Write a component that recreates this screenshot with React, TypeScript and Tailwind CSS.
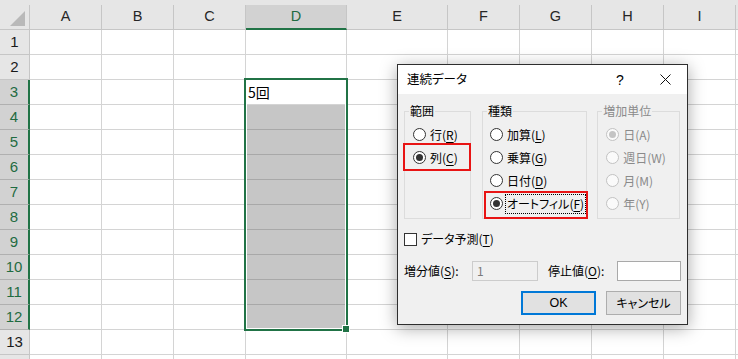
import React from "react";

const COLS = [
  { l: "A", w: 72 },
  { l: "B", w: 72 },
  { l: "C", w: 72 },
  { l: "D", w: 101 },
  { l: "E", w: 101 },
  { l: "F", w: 72 },
  { l: "G", w: 72 },
  { l: "H", w: 72 },
  { l: "I", w: 72 },
];

const ROWS = [1, 2, 3, 4, 5, 6, 7, 8, 9, 10, 11, 12, 13, 14];

function wClass(w: number) {
  return w === 72 ? "w-[72px]" : "w-[101px]";
}

function Radio({
  checked,
  disabled,
  focus,
  children,
}: {
  checked?: boolean;
  disabled?: boolean;
  focus?: boolean;
  children: React.ReactNode;
}) {
  return (
    <div className="h-[23px] flex items-center">
      <span
        className={`w-[13px] h-[13px] rounded-full border flex items-center justify-center shrink-0 ${
          disabled ? "border-[#c2c2c2] bg-[#fafafa]" : "border-[#333333] bg-white"
        }`}
      >
        {checked && (
          <span
            className={`w-[7px] h-[7px] rounded-full ${disabled ? "bg-[#c4c4c4]" : "bg-[#333333]"}`}
          />
        )}
      </span>
      {focus ? (
        <span className="ml-[2px] border border-dotted border-black px-[1px] py-[3px] whitespace-nowrap">
          {children}
        </span>
      ) : (
        <span className={`ml-[4px] whitespace-nowrap ${disabled ? "text-[#8a8a8a]" : ""}`}>{children}</span>
      )}
    </div>
  );
}

function U({ children }: { children: React.ReactNode }) {
  return <span className="underline underline-offset-[2px] decoration-1">{children}</span>;
}

export default function App() {
  return (
    <div className="relative w-[738px] h-[359px] overflow-hidden bg-white">
      {/* Column header */}
      <div className="flex h-[30px] bg-[#e6e6e6] pt-[5px]">
        <div className="w-[30px] h-[25px] shrink-0 border-r border-b border-[#c6c6c6] relative">
          <svg className="absolute left-0 top-0" width="29" height="24" viewBox="0 0 29 24">
            <polygon points="10,21 25,21 25,6" fill="#b9b9b9" />
          </svg>
        </div>
        {COLS.map((c) => (
          <div
            key={c.l}
            className={`${wClass(c.w)} h-[25px] shrink-0 flex items-center justify-center border-r border-[#c6c6c6] font-['Liberation_Sans',sans-serif] text-[14.5px] ${
              c.l === "D"
                ? "bg-[#d2d2d2] border-b-2 border-b-[#217346] text-[#1f6b41]"
                : "border-b text-[#262626]"
            }`}
          >
            {c.l}
          </div>
        ))}
        <div className="flex-1 h-[25px] border-b border-[#c6c6c6]" />
      </div>

      {/* Rows */}
      {ROWS.map((r) => {
        const sel = r >= 3 && r <= 12;
        return (
          <div key={r} className="flex h-[25px]">
            <div
              className={`w-[30px] h-full shrink-0 flex items-center justify-center border-b font-['Liberation_Sans',sans-serif] text-[15px] ${
                sel
                  ? "bg-[#d2d2d2] border-r-2 border-r-[#217346] border-b-[#b0b0b0] text-[#1f6b41]"
                  : "bg-[#e6e6e6] border-r border-[#c6c6c6] text-[#1a1a1a]"
              }`}
            >
              {r <= 13 ? r : ""}
            </div>
            {COLS.map((c) => {
              const gray = c.l === "D" && r >= 4 && r <= 12;
              return (
                <div
                  key={c.l}
                  className={`${wClass(c.w)} h-full shrink-0 border-r border-b ${
                    gray ? "bg-[#c6c6c6] border-r-[#d4d4d4] border-b-[#a8a8a8]" : "border-[#d4d4d4]"
                  } flex items-center`}
                >
                  {c.l === "D" && r === 3 && (
                    <span className="pl-[2px] text-[14px] text-black font-['Noto_Sans_CJK_JP',sans-serif]">
                      5回
                    </span>
                  )}
                </div>
              );
            })}
            <div className="flex-1 h-full border-b border-[#d4d4d4]" />
          </div>
        );
      })}

      {/* Selection border */}
      <div className="absolute left-[244px] top-[78px] w-[104px] h-[253px] border-2 border-[#217346] shadow-[inset_0_0_0_1px_#ffffff] pointer-events-none" />
      <div className="absolute left-[342px] top-[325px] w-[8px] h-[8px] bg-[#217346] border border-white" />

      {/* Dialog */}
      <div className="absolute left-[397px] top-[64px] w-[291px] h-[261px] border border-[#2e2e2e] bg-[#f0f0f0] shadow-[0_3px_16px_rgba(0,0,0,0.35)] flex flex-col font-['Noto_Sans_CJK_JP',sans-serif] [font-feature-settings:'palt'] text-[12px] text-black leading-none">
        <div className="h-[29px] bg-white flex items-center justify-between shrink-0">
          <span className="pl-[9px] text-[12.5px]">連続データ</span>
          <div className="flex h-full">
            <div className="w-[46px] flex items-center justify-center text-[14px] font-['Liberation_Sans',sans-serif]">
              ?
            </div>
            <div className="w-[44px] flex items-center justify-center">
              <svg width="11" height="11" viewBox="0 0 11 11">
                <path d="M0.5 0.5 L10.5 10.5 M10.5 0.5 L0.5 10.5" stroke="#111" strokeWidth="1" />
              </svg>
            </div>
          </div>
        </div>

        <div className="flex-1 flex flex-col pt-[10px] px-[6px]">
          <div className="flex">
            <fieldset className="w-[67px] h-[115px] border border-[#dcdcdc]">
              <legend className="ml-[4px] px-[1px] leading-[14px]">範囲</legend>
              <div className="pl-[8px] pt-[5px]">
                <Radio>
                  行(<U>R</U>)
                </Radio>
                <Radio checked>
                  列(<U>C</U>)
                </Radio>
              </div>
            </fieldset>
            <fieldset className="ml-[11px] w-[105px] h-[115px] border border-[#dcdcdc]">
              <legend className="ml-[4px] px-[1px] leading-[14px]">種類</legend>
              <div className="pl-[7px] pt-[5px]">
                <Radio>
                  加算(<U>L</U>)
                </Radio>
                <Radio>
                  乗算(<U>G</U>)
                </Radio>
                <Radio>
                  日付(<U>D</U>)
                </Radio>
                <Radio checked focus>
                  オートフィル(<U>F</U>)
                </Radio>
              </div>
            </fieldset>
            <fieldset className="ml-[10px] w-[83px] h-[115px] border border-[#dcdcdc]">
              <legend className="ml-[4px] px-[1px] leading-[14px] text-[#8a8a8a]">増加単位</legend>
              <div className="pl-[8px] pt-[5px]">
                <Radio checked disabled>
                  日(A)
                </Radio>
                <Radio disabled>週日(W)</Radio>
                <Radio disabled>月(M)</Radio>
                <Radio disabled>年(Y)</Radio>
              </div>
            </fieldset>
          </div>

          <div className="mt-[13px] h-[14px] flex items-center">
            <span className="w-[13px] h-[13px] border border-[#333333] bg-white shrink-0" />
            <span className="ml-[4px]">
              データ予測(<U>T</U>)
            </span>
          </div>

          <div className="mt-[15px] h-[20px] flex items-center">
            <span className="w-[68px] shrink-0">
              増分値(<U>S</U>):
            </span>
            <div className="w-[66px] h-[20px] border border-[#cccccc] bg-[#f0f0f0] flex items-center pl-[4px] text-[#7a7a7a] shrink-0">
              1
            </div>
            <span className="ml-[10px] w-[69px] shrink-0">
              停止値(<U>O</U>):
            </span>
            <div className="w-[64px] h-[20px] border border-[#a9a9a9] bg-white shrink-0" />
          </div>

          <div className="mt-[10px] flex justify-end gap-[10px]">
            <div className="w-[75px] h-[24px] border-2 border-[#0078d7] bg-[#e1e1e1] flex items-center justify-center font-['Liberation_Sans',sans-serif] text-[12.5px]">
              OK
            </div>
            <div className="w-[75px] h-[24px] border border-[#adadad] bg-[#e1e1e1] flex items-center justify-center">
              キャンセル
            </div>
          </div>
        </div>

        {/* Red annotation frames */}
        <div className="absolute left-[5px] top-[78px] w-[68px] h-[28px] border-2 border-[#e81414]" />
        <div className="absolute left-[86px] top-[126px] w-[104px] h-[28px] border-2 border-[#e81414]" />
      </div>
    </div>
  );
}
